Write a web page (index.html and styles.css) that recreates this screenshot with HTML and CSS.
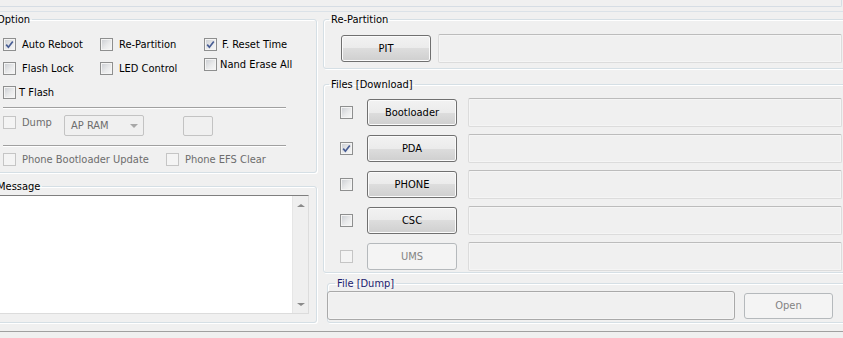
FILE: index.html
```html
<!DOCTYPE html>
<html>
<head>
<meta charset="utf-8">
<title>Odin</title>
<link rel="stylesheet" href="styles.css">
</head>
<body>
	<div class="top"></div>
	<div class="rule"></div>
	<div id="main">
		<div class="left">
			<fieldset class="option">
				<legend>Option</legend>
				<div class="inner">
					<div class="opts">
						<label class="chk gap6"><span class="cb on"><svg viewBox="0 0 11 11"><path d="M2.2 5.6 L4.4 8.2 L8.8 2.4"/></svg></span>Auto Reboot</label>
						<label class="chk gap6"><span class="cb"></span>Re-Partition</label>
						<label class="chk gap5"><span class="cb on"><svg viewBox="0 0 11 11"><path d="M2.2 5.6 L4.4 8.2 L8.8 2.4"/></svg></span>F. Reset Time</label>
						<label class="chk gap6"><span class="cb"></span>Flash Lock</label>
						<label class="chk gap6"><span class="cb"></span>LED Control</label>
						<label class="chk gap3 up"><span class="cb"></span>Nand Erase All</label>
						<label class="chk gap3"><span class="cb"></span>T Flash</label>
					</div>
					<div class="sep"></div>
					<div class="dump-row">
						<label class="chk gap6 off dump"><span class="cb"></span>Dump</label>
						<div class="combo">AP RAM<span class="arrow"></span></div>
						<div class="smallbox"></div>
					</div>
					<div class="sep"></div>
					<div class="phone-row">
						<label class="chk gap6 off boot"><span class="cb"></span>Phone Bootloader Update</label>
						<label class="chk gap6 off"><span class="cb"></span>Phone EFS Clear</label>
					</div>
				</div>
			</fieldset>
			<fieldset class="message">
				<legend>Message</legend>
				<div class="log">
					<div class="scroll">
						<span class="up-arrow"></span>
						<span class="down-arrow"></span>
					</div>
				</div>
			</fieldset>
		</div>
		<div class="right">
			<fieldset class="repart">
				<legend>Re-Partition</legend>
				<div class="line inner">
					<button class="btn">PIT</button>
					<div class="field pit"></div>
				</div>
			</fieldset>
			<fieldset class="files">
				<legend>Files [Download]</legend>
				<div class="rows">
					<div class="frow">
						<span class="cb"></span>
						<button class="btn">Bootloader</button>
						<div class="field"></div>
					</div>
					<div class="frow">
						<span class="cb on"><svg viewBox="0 0 11 11"><path d="M2.2 5.6 L4.4 8.2 L8.8 2.4"/></svg></span>
						<button class="btn">PDA</button>
						<div class="field"></div>
					</div>
					<div class="frow">
						<span class="cb"></span>
						<button class="btn">PHONE</button>
						<div class="field"></div>
					</div>
					<div class="frow">
						<span class="cb"></span>
						<button class="btn">CSC</button>
						<div class="field"></div>
					</div>
					<div class="frow off">
						<span class="cb"></span>
						<button class="btn" disabled>UMS</button>
						<div class="field"></div>
					</div>
				</div>
			</fieldset>
			<fieldset class="dumpfile">
				<legend>File [Dump]</legend>
				<div class="line">
					<div class="field dumpfield"></div>
					<button class="btn open" disabled>Open</button>
				</div>
			</fieldset>
		</div>
	</div>
	<div class="status"></div>
</body>
</html>
```
FILE: styles.css
```css
* {
	box-sizing: border-box;
}

body {
	margin: 0;
	width: 843px;
	height: 338px;
	overflow: hidden;
	background: #f0f0f0;
	font-family: "DejaVu Sans Condensed", "DejaVu Sans", sans-serif;
	font-stretch: condensed;
	font-size: 11px;
	color: #000;
}

.top {
	height: 7px;
	width: 842px;
	border-bottom: 1px solid #d6dde4;
	border-right: 1px solid #d6dde4;
	border-bottom-right-radius: 2px;
}

.rule {
	margin-top: 4px;
	border-top: 1px solid #dbe2e8;
}

#main {
	display: flex;
	height: 320px;
	border-bottom: 1px solid #a0a0a0;
}

.status {
	height: 6px;
}

fieldset {
	margin: 0;
	padding: 0;
	min-width: 0;
	border: 1px solid #d5dfe5;
	border-radius: 3px;
	box-shadow: inset 1px 1px 0 #fff, 1px 1px 0 #fff;
}

legend {
	margin-left: 2px;
	padding: 0 2px;
	height: 15px;
	line-height: 16px;
}

/* left column */
.left {
	margin-left: -8px;
	width: 325px;
	flex: none;
	display: flex;
	flex-direction: column;
	gap: 6px;
}

.option {
	height: 161px;
}

.option .inner {
	padding-left: 10px;
}

.opts {
	display: grid;
	grid-template-columns: 97px 104px auto;
	grid-auto-rows: 24px;
	align-items: center;
	padding-top: 5px;
}

.chk {
	display: flex;
	align-items: center;
	white-space: nowrap;
}

.gap6 .cb { margin-right: 6px; }
.gap5 .cb { margin-right: 5px; }
.gap3 .cb { margin-right: 3px; }

.up {
	margin-bottom: 8px;
}

.cb {
	width: 13px;
	height: 13px;
	flex: none;
	display: inline-flex;
	border: 1px solid #8e8f8f;
	background: linear-gradient(135deg, #c9ccd1 0%, #e9eaeb 55%, #f8f8f8 100%);
	box-shadow: inset 0 0 0 1px #f4f4f4;
}

.cb svg {
	width: 11px;
	height: 11px;
}

.cb path {
	fill: none;
	stroke: #485d94;
	stroke-width: 1.7;
}

.off {
	color: #6d6d6d;
}

.off .cb {
	border-color: #c5c5c5;
	background: #f4f4f4;
	box-shadow: none;
}

.sep {
	width: 283px;
	margin-top: 3px;
	border-top: 1px solid #a0a0a0;
	border-bottom: 1px solid #fff;
}

.dump-row {
	display: flex;
	align-items: center;
	height: 33px;
}

.dump {
	width: 61px;
	margin-bottom: 6px;
}

.combo {
	width: 80px;
	height: 21px;
	border: 1px solid #c3c3c3;
	border-radius: 2px;
	padding-left: 6px;
	display: flex;
	align-items: center;
	color: #6d6d6d;
}

.arrow {
	margin-left: auto;
	margin-right: 5px;
	border-left: 4px solid transparent;
	border-right: 4px solid transparent;
	border-top: 4px solid #a8a8a8;
}

.smallbox {
	width: 30px;
	height: 20px;
	margin-left: 39px;
	border: 1px solid #c3c3c3;
	border-radius: 2px;
}

.phone-row {
	display: flex;
	align-items: center;
	height: 25px;
}

.boot {
	width: 163px;
}

.message {
	height: 144px;
}

.log {
	display: flex;
	height: 119px;
	margin: 1px 7px 0 0;
	background: #fff;
	border: 1px solid #dcdcdc;
	border-top-color: #7f7f7f;
}

.scroll {
	width: 16px;
	margin-left: auto;
	background: #efefef;
	border-left: 1px solid #e6e6e6;
	display: flex;
	flex-direction: column;
	justify-content: space-between;
	align-items: center;
	padding: 8px 0 7px;
}

.up-arrow {
	border-left: 4px solid transparent;
	border-right: 4px solid transparent;
	border-bottom: 3px solid #8a8a8a;
}

.down-arrow {
	border-left: 4px solid transparent;
	border-right: 4px solid transparent;
	border-top: 3px solid #8a8a8a;
}

/* right column */
.right {
	margin-left: 6px;
	width: 540px;
	flex: none;
	display: flex;
	flex-direction: column;
}

.right legend {
	margin-left: 5px;
}

.btn {
	width: 90px;
	height: 27px;
	flex: none;
	padding: 0;
	font: inherit;
	color: #000;
	border: 1px solid #707070;
	border-radius: 3px;
	background: linear-gradient(#f2f2f2 0%, #ebebeb 50%, #dddddd 50%, #cfcfcf 100%);
	box-shadow: inset 0 0 0 1px #fbfbfb;
}

.btn:disabled {
	border-color: #b5b9bc;
	background: #f4f4f4;
	color: #838383;
	box-shadow: none;
}

.field {
	height: 29px;
	border: 1px solid #dcdcdc;
	border-top-color: #bcbcbc;
	border-radius: 2px;
	box-shadow: inset 0 0 0 1px #f5f5f5;
}

.repart {
	height: 57px;
}

.repart .inner {
	padding: 7px 0 0 17px;
}

.line {
	display: flex;
	align-items: center;
}

.pit {
	width: 404px;
	margin-left: 7px;
}

.files {
	margin-top: 8px;
	height: 196px;
}

.rows {
	padding: 7px 0 0 16px;
	display: flex;
	flex-direction: column;
	gap: 9px;
}

.frow {
	display: flex;
	align-items: center;
	height: 27px;
}

.frow .cb {
	margin-right: 14px;
}

.frow .field {
	width: 374px;
	margin-left: 11px;
}

.dumpfile {
	margin: 3px 0 0 4px;
	height: 47px;
}

.dumpfile legend {
	margin-left: 7px;
	color: #1c1c6e;
}

.dumpfield {
	width: 408px;
	margin-left: -1px;
	border-color: #a9a9a9;
	border-radius: 3px;
}

.open {
	width: 89px;
	height: 26px;
	margin-left: 9px;
}
```
